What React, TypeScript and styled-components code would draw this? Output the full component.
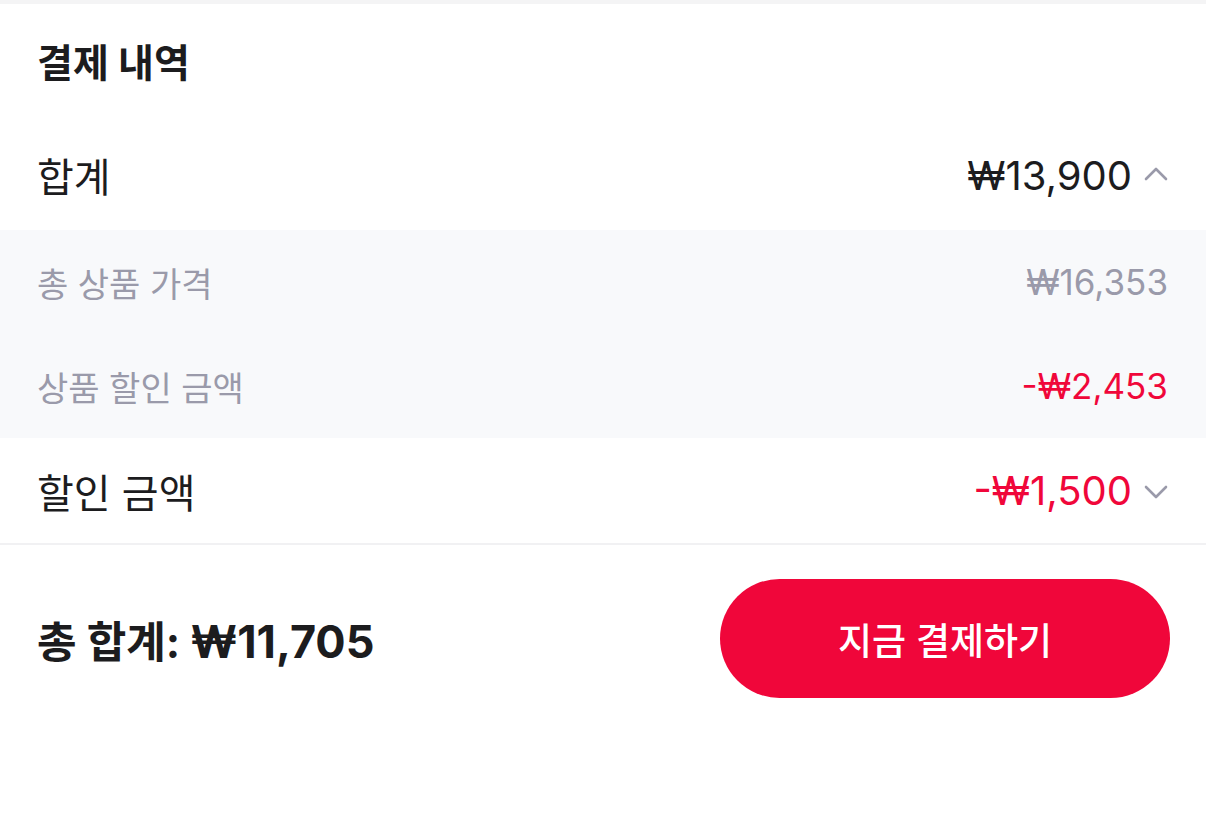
import React from "react";
import styled, {createGlobalStyle} from "styled-components";

const GlobalStyle = createGlobalStyle`
  html, body {
    margin: 0;
    padding: 0;
    background: #ffffff;
  }
  body {
    font-family: Inter, "Noto Sans CJK KR", sans-serif;
  }
`

const Page = styled.div`
  width: 1206px;
  min-height: 837px;
  background: #ffffff;
  border-top: 4px solid #f4f4f5;
  box-sizing: border-box;
`

const Title = styled.h1`
  margin: 0;
  height: 116px;
  padding: 0 37px 4px;
  display: flex;
  align-items: center;
  font-size: 39px;
  font-weight: 700;
  color: #1c1c1e;
  box-sizing: border-box;
`

const Row = styled.div<{h: number}>`
  display: flex;
  align-items: center;
  justify-content: space-between;
  height: ${props => props.h}px;
  padding: 0 38px 0 37px;
  box-sizing: border-box;
`

const Label = styled.span<{sub?: boolean}>`
  font-size: ${props => props.sub ? "34px" : "40px"};
  color: ${props => props.sub ? "#9a9aaa" : "#1c1c1e"};
`

const ValueWrap = styled.div`
  display: flex;
  align-items: center;
  gap: 12px;
`

const Value = styled.span<{sub?: boolean; red?: boolean}>`
  font-size: ${props => props.sub ? "35px" : "40px"};
  color: ${props => props.red ? "#f0073a" : props.sub ? "#9a9aaa" : "#1c1c1e"};
`

const SubPanel = styled.div`
  background: #f8f9fb;
`

const Divider = styled.div`
  height: 2px;
  background: #f1f1f3;
`

const Footer = styled.div`
  display: flex;
  align-items: center;
  justify-content: space-between;
  padding: 34px 36px 0 37px;
`

const Total = styled.span`
  font-size: 43px;
  font-weight: 700;
  color: #1c1c1e;
`

const TotalAmount = styled.span`
  font-size: 45px;
`

const PayButton = styled.button`
  width: 450px;
  height: 119px;
  border: 0;
  border-radius: 60px;
  background: #f0063a;
  color: #ffffff;
  font-family: Inter, "Noto Sans CJK KR", sans-serif;
  font-size: 37px;
  font-weight: 500;
  cursor: pointer;
`

const Chevron: React.FC<{up?: boolean}> = ({up}) => (
    <svg width="24" height="24" viewBox="0 0 24 24" fill="none">
        <path d={up ? "M2 16 L12 6 L22 16" : "M2 8 L12 18 L22 8"} stroke="#9a9aaa" strokeWidth="2.6" strokeLinecap="round" strokeLinejoin="round"/>
    </svg>
)

const App: React.FC = () => {
    return (
        <Page>
            <GlobalStyle/>
            <Title>결제 내역</Title>
            <Row h={110}>
                <Label>합계</Label>
                <ValueWrap>
                    <Value>₩13,900</Value>
                    <Chevron up/>
                </ValueWrap>
            </Row>
            <SubPanel>
                <Row h={104}>
                    <Label sub>총 상품 가격</Label>
                    <Value sub>₩16,353</Value>
                </Row>
                <Row h={104}>
                    <Label sub>상품 할인 금액</Label>
                    <Value sub red>-₩2,453</Value>
                </Row>
            </SubPanel>
            <Row h={105}>
                <Label>할인 금액</Label>
                <ValueWrap>
                    <Value red>-₩1,500</Value>
                    <Chevron/>
                </ValueWrap>
            </Row>
            <Divider/>
            <Footer>
                <Total>총 합계: <TotalAmount>₩11,705</TotalAmount></Total>
                <PayButton>지금 결제하기</PayButton>
            </Footer>
        </Page>
    )
}

export default App;
